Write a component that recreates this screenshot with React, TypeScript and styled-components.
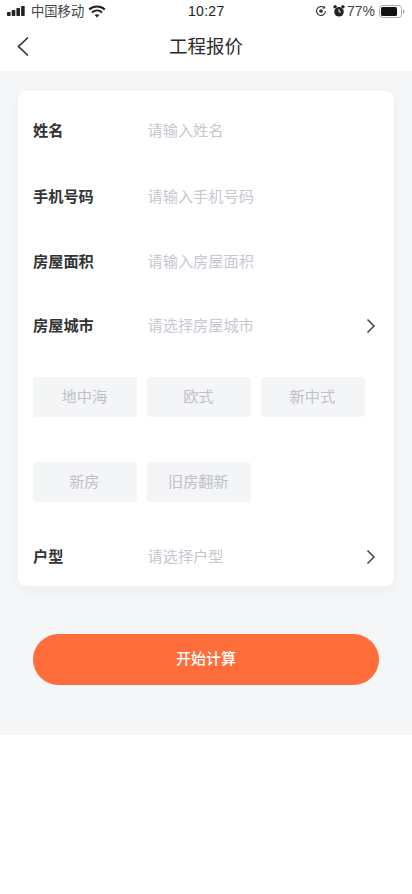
import React from "react";
import styled, { createGlobalStyle } from "styled-components";

const Global = createGlobalStyle`
  html, body { margin: 0; padding: 0; background: #fff; }
  body { font-family: "Noto Sans CJK SC", "Noto Sans", sans-serif; }
  * { box-sizing: border-box; }
`;

const Page = styled.div`
  width: 412px;
  height: 894px;
  background: #fff;
  overflow: hidden;
`;

const StatusBar = styled.div`
  height: 24px;
  padding: 0 7px 2px 7px;
  display: flex;
  align-items: center;
  justify-content: space-between;
  position: relative;
  color: #222;
`;

const StatusGroup = styled.div`
  display: flex;
  align-items: center;
  gap: 4px;
  color: #333;
`;

const Signal = styled.svg`
  margin-right: 2px;
`;

const Carrier = styled.span`
  font-size: 13.3px;
  line-height: 16px;
  margin-bottom: 1px;
  color: #444;
`;

const Clock = styled.span`
  position: absolute;
  left: 188px;
  top: 2px;
  font-family: "Liberation Sans", sans-serif;
  font-size: 14px;
  line-height: 18px;
  letter-spacing: 0.3px;
  color: #222;
`;

const OrientationLock = styled.svg`
  margin-right: 2px;
`;

const AlarmIcon = styled.svg`
  margin-right: -2px;
`;

const Percent = styled.span`
  font-family: "Liberation Sans", sans-serif;
  font-size: 14px;
  line-height: 16px;
  color: #444;
`;

const NavBar = styled.div`
  height: 47px;
  position: relative;
  display: flex;
  align-items: center;
  justify-content: center;
`;

const BackIcon = styled.svg`
  position: absolute;
  left: 16px;
  top: 12px;
`;

const Title = styled.h1`
  margin: 0 0 6px;
  font-size: 18.5px;
  line-height: 26px;
  font-weight: 400;
  color: #2b2b2b;
`;

const Body = styled.main`
  height: 664px;
  background: #f4f6f8;
  padding: 20px 18px 0;
`;

const Card = styled.section`
  height: 495px;
  background: #fff;
  border-radius: 8px;
  padding: 0 15px;
  box-shadow: 0 4px 12px rgba(40, 50, 70, 0.04);
`;

const Row = styled.div<{ $h: number }>`
  height: ${(p) => p.$h}px;
  display: flex;
  align-items: center;
`;

const Label = styled.span`
  width: 115px;
  flex: none;
  font-size: 15.2px;
  line-height: 22px;
  margin-bottom: 4px;
  font-weight: 700;
  color: #333;
`;

const Hint = styled.span`
  flex: 1;
  margin-left: -0.5px;
  font-size: 15.2px;
  line-height: 22px;
  margin-bottom: 4px;
  color: #c6c8cf;
`;

const Chevron = styled.svg`
  flex: none;
  margin-right: 2.5px;
`;

const Chips = styled.div<{ $top: number; $bottom: number }>`
  display: flex;
  gap: 10.3px;
  margin: ${(p) => p.$top}px 0 ${(p) => p.$bottom}px;
`;

const Chip = styled.div`
  width: 103.7px;
  height: 40px;
  padding: 0 1px 4px 0;
  background: #f4f5f7;
  border-radius: 4px;
  display: flex;
  align-items: center;
  justify-content: center;
  font-size: 15.2px;
  color: #bfc1c7;
`;

const Action = styled.button`
  display: block;
  width: 346px;
  height: 51px;
  margin: 48px 0 0 15px;
  padding: 0 0 4px;
  border: 0;
  border-radius: 26px;
  background: #ff6e3a;
  color: #fff;
  font-family: inherit;
  font-size: 15px;
  font-weight: 500;
`;

const Arrow = () => (
  <Chevron width="12" height="16" viewBox="0 0 12 16" fill="none" stroke="#444" strokeWidth="1.5">
    <path d="M2.500 1.500 9 8l-6.500 6.500" />
  </Chevron>
);

export default function App() {
  return (
    <Page>
      <Global />
      <StatusBar>
        <StatusGroup>
          <Signal width="18" height="10" viewBox="0 0 18 10" fill="#222">
            <rect x="0" y="6" width="3.600" height="4" rx="0.700" />
            <rect x="4.700" y="4" width="3.600" height="6" rx="0.700" />
            <rect x="9.400" y="2" width="3.600" height="8" rx="0.700" />
            <rect x="14.100" y="0" width="3.600" height="10" rx="0.700" />
          </Signal>
          <Carrier>中国移动</Carrier>
          <svg width="18" height="13" viewBox="0 0 18 13" fill="none" stroke="#222" strokeWidth="2">
            <path d="M1.200 4.500C5.500.6 12.500.6 16.800 4.500" />
            <path d="M4 7.400c2.900-2.500 7.100-2.500 10 0" />
            <path d="M9 12.500 6.600 10c1.400-1.100 3.400-1.100 4.800 0Z" fill="#222" stroke="none" />
          </svg>
        </StatusGroup>
        <Clock>10:27</Clock>
        <StatusGroup>
          <OrientationLock width="12" height="12" viewBox="0 0 13 13" fill="none" stroke="#333" strokeWidth="1.200">
            <path d="M11.300 6.500a4.800 4.800 0 1 1-1.400-3.400" />
            <path d="M10.500 1v2.400H8.100" strokeWidth="1" />
            <circle cx="6.500" cy="6.500" r="2" fill="#333" stroke="none" />
          </OrientationLock>
          <AlarmIcon width="12" height="12" viewBox="0 0 12 12">
            <circle cx="6" cy="6.800" r="4.800" fill="#222" />
            <rect x="0.500" y="0.500" width="3.400" height="2.600" rx="1" fill="#222" transform="rotate(-35 2 2)" />
            <rect x="8.100" y="0.500" width="3.400" height="2.600" rx="1" fill="#222" transform="rotate(35 10 2)" />
            <path d="M6 4v3h2" fill="none" stroke="#fff" strokeWidth="0.900" />
          </AlarmIcon>
          <Percent>77%</Percent>
          <svg width="26" height="13" viewBox="0 0 26 13" fill="none">
            <rect x="0.500" y="0.500" width="22" height="12" rx="3" stroke="#aaa" />
            <rect x="2" y="2" width="16" height="9" rx="1.500" fill="#111" />
            <path d="M24 4.500c1 .3 1.500 1 1.500 2s-.5 1.700-1.500 2Z" fill="#aaa" />
          </svg>
        </StatusGroup>
      </StatusBar>
      <NavBar>
        <BackIcon width="14" height="21" viewBox="0 0 14 21" fill="none" stroke="#333" strokeWidth="1.700">
          <path d="M12 1.500 2.500 10.500l9.500 9" />
        </BackIcon>
        <Title>工程报价</Title>
      </NavBar>
      <Body>
        <Card>
          <Row $h={79}>
            <Label>姓名</Label>
            <Hint>请输入姓名</Hint>
          </Row>
          <Row $h={53}>
            <Label>手机号码</Label>
            <Hint>请输入手机号码</Hint>
          </Row>
          <Row $h={77}>
            <Label>房屋面积</Label>
            <Hint>请输入房屋面积</Hint>
          </Row>
          <Row $h={52}>
            <Label>房屋城市</Label>
            <Hint>请选择房屋城市</Hint>
            <Arrow />
          </Row>
          <Chips $top={25} $bottom={45}>
            <Chip>地中海</Chip>
            <Chip>欧式</Chip>
            <Chip>新中式</Chip>
          </Chips>
          <Chips $top={0} $bottom={30}>
            <Chip>新房</Chip>
            <Chip>旧房翻新</Chip>
          </Chips>
          <Row $h={50}>
            <Label>户型</Label>
            <Hint>请选择户型</Hint>
            <Arrow />
          </Row>
        </Card>
        <Action>开始计算</Action>
      </Body>
    </Page>
  );
}
